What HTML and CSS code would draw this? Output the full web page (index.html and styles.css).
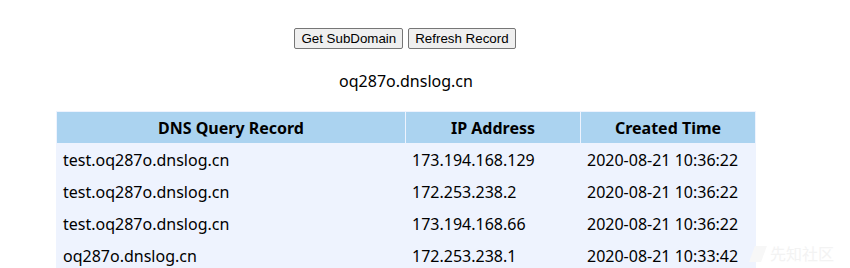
FILE: index.html
```html
<!DOCTYPE html>
<html>
<head>
<meta charset="utf-8">
<link rel="stylesheet" href="styles.css">
</head>
<body>
<div class="page">
  <div class="actions">
    <button class="btn">Get SubDomain</button>
    <button class="btn">Refresh Record</button>
  </div>
  <div class="domain">oq287o.dnslog.cn</div>
  <table class="records">
    <thead>
      <tr><th class="c1">DNS Query Record</th><th class="c2">IP Address</th><th class="c3">Created Time</th></tr>
    </thead>
    <tbody>
      <tr><td>test.oq287o.dnslog.cn</td><td>173.194.168.129</td><td>2020-08-21 10:36:22</td></tr>
      <tr><td>test.oq287o.dnslog.cn</td><td>172.253.238.2</td><td>2020-08-21 10:36:22</td></tr>
      <tr><td>test.oq287o.dnslog.cn</td><td>173.194.168.66</td><td>2020-08-21 10:36:22</td></tr>
      <tr><td>oq287o.dnslog.cn</td><td>172.253.238.1</td><td>2020-08-21 10:33:42</td></tr>
    </tbody>
  </table>
</div>
<div class="watermark"><span class="wm-logo"></span>先知社区</div>
</body>
</html>
```

FILE: styles.css
```css
html, body {
  margin: 0;
  padding: 0;
  background: #ffffff;
}
body {
  width: 850px;
  height: 268px;
  overflow: hidden;
  position: relative;
  font-family: "Noto Sans", "Noto Sans CJK SC", sans-serif;
  color: #000;
}
.page {
  width: 812px;
  padding-top: 28px;
  text-align: center;
}
.actions {
  display: flex;
  justify-content: center;
  gap: 5px;
  height: 21px;
  padding-right: 2px;
}
.btn {
  font-family: "Liberation Sans", Arial, sans-serif;
  font-size: 13.33px;
  color: #000;
  background: #efefef;
  border: 1px solid #767676;
  border-radius: 2px;
  padding: 1px 6px;
  height: 21px;
  margin: 0;
}
.domain {
  margin-top: 21px;
  font-size: 16px;
  line-height: 22px;
  height: 22px;
}
.records {
  margin: 19px auto 0;
  width: 700px;
  border-collapse: separate;
  border-spacing: 1px;
  background: #eef3fe;
  font-size: 16px;
  text-align: left;
}
.records th {
  background: #abd3f0;
  font-weight: bold;
  text-align: center;
  height: 29px;
  padding: 2px 5px 0;
  line-height: 29px;
}
.records td {
  height: 29px;
  padding: 2px 5px 0 6px;
  line-height: 29px;
  background: #eef3fe;
}
.c1 { width: 338px; }
.c2 { width: 164px; }
.c3 { width: 164px; }
.watermark {
  position: absolute;
  left: 752px;
  top: 244px;
  font-size: 16px;
  line-height: 20px;
  color: #f3f3f3;
  display: flex;
  align-items: center;
  gap: 6px;
}
.wm-logo {
  width: 12px;
  height: 16px;
  background: #f7f7f7;
  transform: skewX(-20deg);
}
```
